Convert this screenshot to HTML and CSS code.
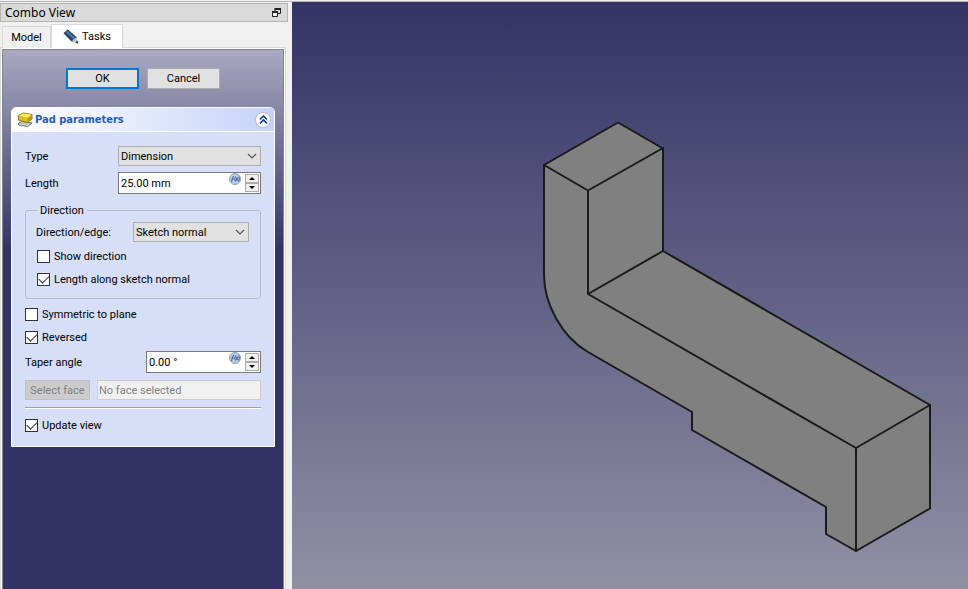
FILE: index.html
```html
<!DOCTYPE html>
<html lang="en">
<head>
<meta charset="utf-8">
<title>Combo View</title>
<link rel="stylesheet" href="styles.css">
</head>
<body>
<svg class="defs" aria-hidden="true">
  <symbol id="chevron" viewBox="0 0 10 6"><path d="M1 1l4 4 4-4" fill="none" stroke="#555" stroke-width="1.2"/></symbol>
  <symbol id="fx" viewBox="0 0 12 12">
    <circle cx="6" cy="6" r="5.5" fill="#b9cbe0" stroke="#8ea3ba"/>
    <path d="M2.500 9l1.600-5.500h1M2.600 6h2.200M6.500 3.500q-1.500 2.500 0 5M7 4.500l2 3.500M9 4.500l-2 3.500M9.800 3.500q1.200 2.500 0 5" fill="none" stroke="#41679a" stroke-width="1"/>
  </symbol>
</svg>
<main class="app">
  <aside class="dock">
    <header class="dock-title">
      <h1>Combo View</h1>
      <button class="float" type="button" aria-label="Float panel">
        <svg width="9" height="9" viewBox="0 0 9 9"><path d="M3 3.500V1h5.500v4.500H6" fill="none" stroke="#222"/><path d="M2.500 1H9" stroke="#222" stroke-width="2"/><path d="M.5 4h5v4.500h-5z" fill="#eee" stroke="#222"/><path d="M0 4h6" stroke="#222" stroke-width="2"/></svg>
      </button>
    </header>
    <nav class="tabs">
      <button class="tab" type="button">Model</button>
      <button class="tab active" type="button">
        <svg width="16" height="16" viewBox="0 0 16 16"><path d="M.8 4.200L4.800.8 13.500 8.500 9 12.500z" fill="#2b4d78" stroke="#1d3350" stroke-width=".7"/><path d="M3.500 2.500l8.500 7.800" stroke="#5f84b0" stroke-width="1.400"/><path d="M2.200 4.300l7 7.200" stroke="#1d3555" stroke-width="1"/><path d="M9 12.500l1.200-2.300 1.500-.2.300-1.300 1.500-.2L15 14.500z" fill="#b4c3d3"/><path d="M12.300 13.500l2.900 1.300-.7-3z" fill="#15243a"/></svg>
        Tasks
      </button>
    </nav>
    <section class="tasks">
      <div class="actions">
        <button class="btn primary" type="button">OK</button>
        <button class="btn" type="button">Cancel</button>
      </div>
      <form class="card">
        <header class="card-head">
          <svg width="16" height="16" viewBox="0 0 16 16"><path d="M1.500 11l4-1.500 9.500 1.500-4.500 3.800-4.500-1.300-1.500.6-3-1.300z" fill="#c9c9c4" stroke="#6e6e68" stroke-width=".9"/><path d="M1.500 3.500L6 1l9 1.500v4.500L10.500 10.500 1.500 8.200z" fill="#dfc01c" stroke="#75630d" stroke-width=".8"/><path d="M2 3.700L6 1.400l8.500 1.400-4 2.700z" fill="#fff05a"/><path d="M10.600 6v4.200l4-3.200V3.200z" fill="#bd9e0a"/></svg>
          <h2>Pad parameters</h2>
          <button class="collapse" type="button" aria-label="Collapse">
            <svg width="9" height="9" viewBox="0 0 9 9"><path d="M1 4.500L4.500 1 8 4.500M1 8.500L4.500 5 8 8.500" fill="none" stroke="#0c3c9c" stroke-width="1.600"/></svg>
          </button>
        </header>
        <div class="card-body">
          <div class="row">
            <label for="type">Type</label>
            <span class="combo wide"><select id="type"><option>Dimension</option></select><svg width="10" height="6"><use href="#chevron"/></svg></span>
          </div>
          <div class="row length-row">
            <label for="length">Length</label>
            <span class="spin wide"><input id="length" type="text" value="25.00 mm"><svg width="12" height="12"><use href="#fx"/></svg><span class="steps"><button type="button" class="up" aria-label="Increase length"></button><button type="button" class="down" aria-label="Decrease length"></button></span></span>
          </div>
          <fieldset>
            <legend>Direction</legend>
            <div class="row">
              <label for="edge">Direction/edge:</label>
              <span class="combo edge"><select id="edge"><option>Sketch normal</option></select><svg width="10" height="6"><use href="#chevron"/></svg></span>
            </div>
            <label class="check"><input type="checkbox">Show direction</label>
            <label class="check"><input type="checkbox" checked>Length along sketch normal</label>
          </fieldset>
          <label class="check"><input type="checkbox">Symmetric to plane</label>
          <label class="check"><input type="checkbox" checked>Reversed</label>
          <div class="row taper-row">
            <label for="taper">Taper angle</label>
            <span class="spin taper"><input id="taper" type="text" value="0.00 °"><svg width="12" height="12"><use href="#fx"/></svg><span class="steps"><button type="button" class="up" aria-label="Increase taper angle"></button><button type="button" class="down" aria-label="Decrease taper angle"></button></span></span>
          </div>
          <div class="row face-row">
            <button class="face" type="button" disabled>Select face</button>
            <input class="face-name" type="text" value="No face selected" aria-label="Selected face" disabled>
          </div>
          <hr>
          <label class="check"><input type="checkbox" checked>Update view</label>
        </div>
      </form>
    </section>
  </aside>
  <section class="viewport" aria-label="3D view">
    <svg viewBox="0 0 676 587" width="676" height="587">
      <g transform="translate(-292 -2)" stroke="#1a1a1a" stroke-width="2" stroke-linejoin="round" stroke-linecap="round">
        <path d="M618 122.500L663 148.500V251L930 405V508.500L856 551 826 534V507L692 430V412L588 352C562 337 544 304 544 275V165z" fill="#808080"/>
        <path d="M544 165l44 25.500 75-42.500M588 190.500V294l75-43M588 294l268 154 74-43M856 448V551" fill="none"/>
      </g>
    </svg>
  </section>
</main>
</body>
</html>
```
FILE: styles.css
```css
* { box-sizing: border-box; }
body { margin: 0; padding-top: 1px; background: #f0f0f0; color: #000; font: 11px/17px Roboto, sans-serif; }
button, input, select { margin: 0; padding: 0; font: inherit; color: inherit; }
h1, h2 { margin: 0; font-weight: normal; }
.defs { position: absolute; width: 0; height: 0; }
.app { display: grid; grid-template-columns: 292px 1fr; min-height: calc(100vh - 1px); border-top: 1px solid #b8b8b8; }
.dock { display: flex; flex-direction: column; padding: 1px 4px 0 0; }
.dock-title { display: flex; align-items: center; justify-content: space-between; height: 19px; padding: 0 6px 0 4px; border: 1px solid #b4b4b4; background: #dadada; }
.dock-title h1 { font-family: "Noto Sans", sans-serif; font-size: 12px; }
.float { display: flex; border: 0; background: none; }
.tabs { position: relative; z-index: 1; display: flex; align-items: flex-end; height: 26px; padding-left: 2px; }
.tab { display: flex; align-items: center; justify-content: center; width: 49px; height: 22px; border: 1px solid #d9d9d9; border-bottom: 0; background: #f0f0f0; }
.tab.active { gap: 3px; width: 72px; height: 24px; background: #fff; }
.tasks { flex: 1; margin: 1px 4px 0 2px; padding: 18px 8px 0; border: 1px solid #85858f; border-bottom: 0; background: linear-gradient(#a9a9c1, #333366 200px); box-shadow: 0 0 0 1px #fff, 0 0 0 2px #d9d9d9; }
.actions { display: flex; justify-content: center; gap: 8px; }
.btn { width: 73px; height: 21px; border: 1px solid #adadad; background: #e1e1e1; }
.primary { border: 2px solid #0078d7; }
.card { margin-top: 18px; border: 1px solid #fff; border-radius: 5px 5px 0 0; background: #d6dff7; }
.card-head { display: flex; align-items: center; gap: 2px; height: 24px; padding: 0 3px 0 5px; border-bottom: 1px solid #fff; border-radius: 4px 4px 0 0; background: linear-gradient(90deg, #fff, #c6d3f7); }
.card-head h2 { flex: 1; color: #215dc6; font-family: "DejaVu Sans Condensed", "DejaVu Sans", sans-serif; font-size: 11px; font-weight: bold; }
.collapse { display: grid; place-items: center; width: 16px; height: 16px; border: 1px solid #b3bddb; border-radius: 50%; background: #fff; }
.card-body { padding: 14px 13px 13px; }
.row { display: flex; align-items: center; justify-content: space-between; }
.length-row { margin-top: 6px; }
.combo, .spin { position: relative; display: flex; }
.wide { width: 143px; }
.edge { width: 116px; }
.taper { width: 115px; }
.combo select { width: 100%; height: 20px; padding: 1px 2px 0; border: 1px solid #adadad; border-radius: 0; background: #e1e1e1; appearance: none; }
.combo svg { position: absolute; right: 4px; top: 7px; pointer-events: none; }
.spin { height: 22px; border: 1px solid #7a7a7a; background: #fff; }
.spin input { flex: 1; min-width: 0; padding: 1px 0 0 2px; border: 0; background: none; outline: 0; }
.spin svg { margin-right: 3px; }
.steps { display: flex; flex-direction: column; width: 14px; margin: 1px; }
.steps button { display: grid; flex: 1; place-items: center; border: 1px solid #adadad; background: #f0f0f0; }
.steps button::after { content: ""; border: 3px solid transparent; border-top-width: 0; border-bottom-color: #000; }
.steps .down::after { border-top: 3px solid #000; border-bottom-width: 0; }
fieldset { margin: 8px 0 7px; padding: 3px 11px 11px 10px; border: 1px solid #b9bdc9; border-radius: 3px; }
legend { margin-left: 1px; padding: 0 3px; }
.check { display: flex; align-items: center; gap: 4px; height: 16px; }
fieldset .check { padding-left: 1px; }
.check + .check { margin-top: 7px; }
.row + .check { margin-top: 6px; }
.check input { appearance: none; width: 13px; height: 13px; border: 1px solid #333; background: #fff; }
.check input:checked::after { content: ""; display: block; width: 9px; height: 5px; margin: 2px 1px; border: solid #333; border-width: 0 0 1px 1px; transform: translateY(-1px) rotate(-45deg); }
.taper-row { margin-top: 6px; }
.face-row { gap: 7px; margin-top: 7px; }
.face { width: 65px; height: 20px; border: 1px solid #bfbfbf; background: #ccc; color: #838383; }
.face-name { flex: 1; min-width: 0; height: 20px; padding: 0 1px; border: 1px solid #ccc; background: #f0f0f0; color: #838383; }
hr { height: 2px; margin: 7px 0 8px; border: 0; border-top: 1px solid #a0a0a0; border-bottom: 1px solid #fff; }
.viewport { overflow: hidden; background: linear-gradient(#333366, #9090a5); }
.viewport svg { display: block; }
```
